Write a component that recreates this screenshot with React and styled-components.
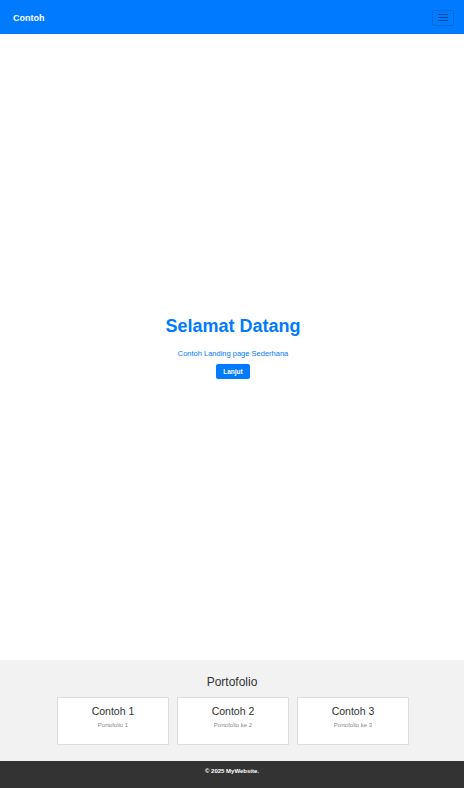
import React from "react";
import styled, { createGlobalStyle } from "styled-components";

const GlobalStyle = createGlobalStyle`
  * { box-sizing: border-box; }
  html, body { margin: 0; padding: 0; }
  body {
    font-family: "Liberation Sans", Arial, sans-serif;
    background: #fff;
    color: #333;
  }
`;

const projects = [
  { id: 1, title: "Contoh 1", desc: "Portofolio 1" },
  { id: 2, title: "Contoh 2", desc: "Portofolio ke 2" },
  { id: 3, title: "Contoh 3", desc: "Portofolio ke 3" },
];

export default function App() {
  return (
    <>
      <GlobalStyle />
      <Page>
        <Navbar>
          <Brand>Contoh</Brand>
          <Toggler aria-label="menu">
            <Bar />
            <Bar />
            <Bar />
          </Toggler>
        </Navbar>

        <Hero>
          <Title>Selamat Datang</Title>
          <Subtitle>Contoh Landing page Sederhana</Subtitle>
          <CtaButton>Lanjut</CtaButton>
        </Hero>

        <Portfolio>
          <SectionTitle>Portofolio</SectionTitle>
          <CardRow>
            {projects.map((p) => (
              <Card key={p.id}>
                <CardTitle>{p.title}</CardTitle>
                <CardText>{p.desc}</CardText>
              </Card>
            ))}
          </CardRow>
        </Portfolio>

        <Footer>© 2025 MyWebsite.</Footer>
      </Page>
    </>
  );
}

const Page = styled.div`
  min-height: 100vh;
  display: flex;
  flex-direction: column;
`;

const Navbar = styled.nav`
  height: 34px;
  background: #007bff;
  display: flex;
  align-items: center;
  justify-content: space-between;
  padding: 0 10px 0 13px;
`;

const Brand = styled.a`
  color: #fff;
  font-size: 9px;
  font-weight: bold;
  line-height: 10px;
  margin-top: 1px;
`;

const Toggler = styled.button`
  width: 22px;
  height: 16px;
  padding: 0;
  margin-top: 1px;
  background: transparent;
  border: 1px solid rgba(0, 0, 0, 0.15);
  border-radius: 2px;
  display: flex;
  flex-direction: column;
  align-items: center;
  justify-content: center;
  gap: 2px;
`;

const Bar = styled.span`
  display: block;
  width: 10px;
  height: 1px;
  background: rgba(0, 0, 0, 0.4);
`;

const Hero = styled.section`
  flex: 1;
  display: flex;
  flex-direction: column;
  align-items: center;
  justify-content: center;
  text-align: center;
  padding-top: 1px;
  padding-left: 2px;
`;

const Title = styled.h1`
  margin: 0 0 12px;
  font-size: 18px;
  line-height: 21px;
  font-weight: bold;
  color: #007bff;
`;

const Subtitle = styled.p`
  margin: 0 0 6px;
  font-size: 7.5px;
  line-height: 9px;
  color: #007bff;
`;

const CtaButton = styled.button`
  font-family: inherit;
  background: #007bff;
  color: #fff;
  border: none;
  border-radius: 2px;
  font-size: 6.5px;
  font-weight: bold;
  line-height: 7px;
  padding: 4px 7px;
`;

const Portfolio = styled.section`
  background: #f2f2f2;
  padding: 15px 0 16px;
  text-align: center;
`;

const SectionTitle = styled.h2`
  margin: 0 0 8px;
  font-size: 12px;
  line-height: 14px;
  font-weight: normal;
  color: #333;
`;

const CardRow = styled.div`
  display: flex;
  justify-content: center;
  gap: 8px;
  padding-left: 2px;
`;

const Card = styled.div`
  width: 112px;
  height: 48px;
  background: #fff;
  border: 1px solid #ddd;
  padding-top: 7px;
`;

const CardTitle = styled.h3`
  margin: 0 0 5px;
  font-size: 10.5px;
  line-height: 12px;
  font-weight: normal;
  color: #333;
`;

const CardText = styled.p`
  margin: 0;
  font-size: 6px;
  line-height: 7px;
  color: #888;
`;

const Footer = styled.footer`
  background: #333;
  color: #fff;
  text-align: center;
  font-size: 6px;
  font-weight: bold;
  line-height: 7px;
  padding: 7px 0 13px;
`;
